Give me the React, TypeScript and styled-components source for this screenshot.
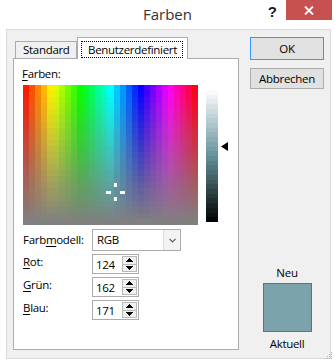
import React from 'react';
import styled, { createGlobalStyle } from 'styled-components';

const FONT = `"Open Sans", "Noto Sans", "Liberation Sans", sans-serif`;

const Global = createGlobalStyle`
  html, body { margin: 0; padding: 0; background: #fff; }
  body { font-family: ${FONT}; font-size: 11.5px; letter-spacing: -0.3px; color: #000; }
  * { box-sizing: border-box; }
`;

const Window = styled.div`
  width: 335px;
  height: 362px;
  background: #fff;
  display: flex;
  flex-direction: column;
  overflow: hidden;
  position: relative;
`;

const TitleBar = styled.div`
  height: 29px;
  display: grid;
  grid-template-columns: 1fr auto 1fr;
  align-items: start;
`;

const Title = styled.div`
  grid-column: 2;
  font-size: 15px;
  letter-spacing: 0;
  line-height: 20px;
  padding-top: 4px;
  color: #333;
`;

const Controls = styled.div`
  grid-column: 3;
  justify-self: end;
  display: flex;
  align-items: flex-start;
  margin-right: 3px;
`;

const HelpGlyph = styled.div`
  font-family: "Liberation Sans", sans-serif;
  font-weight: bold;
  font-size: 15px;
  letter-spacing: 0;
  line-height: 16px;
  padding-top: 4px;
  margin-right: 9px;
  color: #1a1a1a;
`;

const CloseButton = styled.div`
  width: 46px;
  height: 20px;
  background: #c75050;
  display: flex;
  align-items: center;
  justify-content: center;
`;

const Client = styled.div`
  margin: 0 4px 3px 6px;
  height: 330px;
  border: 1px solid #dadada;
  background: #f0f0f0;
  display: flex;
  padding: 7px 6px 0 6px;
  gap: 11px;
`;

const LeftCol = styled.div`
  width: 226px;
  display: flex;
  flex-direction: column;
`;

const TabStrip = styled.div`
  display: flex;
  align-items: flex-end;
  padding-left: 2px;
  margin-bottom: -1px;
  position: relative;
  z-index: 1;
`;

const Tab = styled.div<{ $active?: boolean; $w: number }>`
  width: ${(p) => p.$w}px;
  height: ${(p) => (p.$active ? 22 : 18)}px;
  border: 1px solid #acacac;
  border-bottom: ${(p) => (p.$active ? 'none' : '1px solid #acacac')};
  background: ${(p) => (p.$active ? '#fff' : '#f0f0f0')};
  padding: ${(p) => (p.$active ? '3px 4px 0 3px' : '0 0 0 7px')};
  line-height: 16px;
  white-space: nowrap;
  display: flex;
  align-items: ${(p) => (p.$active ? 'flex-start' : 'center')};
`;

const FocusText = styled.span`
  flex: 1;
  border: 1px dotted #000;
  padding: 0 0 0 6px;
  line-height: 15px;
`;

const Panel = styled.div`
  height: 292px;
  background: #fff;
  border: 1px solid #acacac;
  padding: 7px 0 0 8px;
  display: flex;
  flex-direction: column;
`;

const U = styled.span`
  text-decoration: underline;
  text-underline-offset: 2px;
`;

const SectionLabel = styled.div`
  line-height: 16px;
  height: 18px;
`;

const PickerRow = styled.div`
  display: flex;
  align-items: flex-start;
  margin-top: 1px;
  padding-left: 1px;
`;

const SpectrumSvg = styled.svg`
  display: block;
  flex: none;
`;

const LumBar = styled.svg`
  display: block;
  flex: none;
  margin: 5px 0 0 8px;
`;

const LumArrow = styled.svg`
  display: block;
  flex: none;
  margin-left: 3px;
`;

const FieldRow = styled.div<{ $gap: number; $center?: boolean }>`
  display: flex;
  align-items: ${(p) => (p.$center ? 'center' : 'flex-start')};
  margin-top: ${(p) => p.$gap}px;
  padding-left: 1px;
`;

const FieldLabel = styled.div`
  width: 69px;
  line-height: 16px;
  flex: none;
`;

const Select = styled.div`
  width: 89px;
  height: 22px;
  border: 1px solid #acacac;
  background: #fff;
  display: flex;
`;

const SelectValue = styled.div`
  flex: 1;
  padding-left: 4px;
  line-height: 20px;
`;

const SelectButton = styled.div`
  width: 17px;
  border-left: 1px solid #dcdcdc;
  background: #f3f3f3;
  display: flex;
  align-items: center;
  justify-content: center;
`;

const SpinBox = styled.div`
  width: 47px;
  height: 20px;
  border: 1px solid #acacac;
  background: #fff;
  display: flex;
  padding: 1px;
`;

const SpinValue = styled.div`
  flex: 1;
  padding-left: 2px;
  line-height: 18px;
`;

const SpinButtons = styled.div`
  width: 15px;
  display: flex;
  flex-direction: column;
  border: 1px solid #b9b9b9;
  background: #f0f0f0;
`;

const SpinHalf = styled.div<{ $top?: boolean }>`
  flex: 1;
  display: flex;
  align-items: center;
  justify-content: center;
  border-bottom: ${(p) => (p.$top ? '1px solid #b9b9b9' : 'none')};
`;

const RightCol = styled.div`
  width: 74px;
  display: flex;
  flex-direction: column;
  padding-bottom: 7px;
`;

const PushButton = styled.div<{ $default?: boolean; $h: number }>`
  height: ${(p) => p.$h}px;
  border: 1px solid ${(p) => (p.$default ? '#3399ff' : '#adadad')};
  background: #e1e1e1;
  display: flex;
  align-items: center;
  justify-content: center;
  margin-bottom: 8px;
`;

const PreviewGroup = styled.div`
  margin-top: auto;
  display: flex;
  flex-direction: column;
  align-items: center;
`;

const PreviewCaption = styled.div`
  line-height: 15px;
`;

const Swatch = styled.div<{ $color: string }>`
  width: 49px;
  height: 49px;
  border: 1px solid #6d6d6d;
  background: ${(p) => p.$color};
  margin: 3px 0 4px 1px;
`;

const Grip = styled.svg`
  position: absolute;
  right: 2px;
  bottom: 2px;
`;

const SPEC_W = 175;
const SPEC_H = 140;
const COLS = 29;
const ROWS = 23;

const hsl = (h: number, s: number, l: number) =>
  `hsl(${h.toFixed(1)}, ${(s * 100).toFixed(1)}%, ${(l * 100).toFixed(1)}%)`;

const Spectrum: React.FC = () => {
  const rects: React.ReactNode[] = [];
  for (let i = 0; i < COLS; i++) {
    const x0 = Math.round((i * SPEC_W) / COLS);
    const x1 = Math.round(((i + 1) * SPEC_W) / COLS);
    const hue = ((i + 0.5) / COLS) * 360;
    for (let j = 0; j < ROWS; j++) {
      const y0 = Math.round((j * SPEC_H) / ROWS);
      const y1 = Math.round(((j + 1) * SPEC_H) / ROWS);
      const sat = 1 - j / (ROWS - 1);
      rects.push(
        <rect key={`${i}-${j}`} x={x0} y={y0} width={x1 - x0} height={y1 - y0} fill={hsl(hue, sat, 0.5)} />
      );
    }
  }
  return (
    <SpectrumSvg width={SPEC_W} height={SPEC_H} viewBox={`0 0 ${SPEC_W} ${SPEC_H}`} shapeRendering="crispEdges">
      {rects}
      <rect x={91} y={98} width={3} height={4} fill="#fff" />
      <rect x={91} y={112} width={3} height={4} fill="#fff" />
      <rect x={83} y={106} width={5} height={3} fill="#fff" />
      <rect x={97} y={106} width={5} height={3} fill="#fff" />
    </SpectrumSvg>
  );
};

const LUM_H = 132;
const LUM_BANDS = 28;

const Luminance: React.FC<{ h: number; s: number }> = ({ h, s }) => {
  const bands: React.ReactNode[] = [];
  for (let k = 0; k < LUM_BANDS; k++) {
    const y0 = Math.round((k * LUM_H) / LUM_BANDS);
    const y1 = Math.round(((k + 1) * LUM_H) / LUM_BANDS);
    const l = 1 - (k + 0.5) / LUM_BANDS;
    bands.push(<rect key={k} x={0} y={y0} width={12} height={y1 - y0} fill={hsl(h, s, l)} />);
  }
  return (
    <LumBar width={12} height={LUM_H} viewBox={`0 0 12 ${LUM_H}`} shapeRendering="crispEdges">
      {bands}
    </LumBar>
  );
};

const Spin: React.FC<{ value: number }> = ({ value }) => (
  <SpinBox>
    <SpinValue>{value}</SpinValue>
    <SpinButtons>
      <SpinHalf $top>
        <svg width="7" height="4" viewBox="0 0 7 4" shapeRendering="crispEdges">
          <polygon points="3.5,0 7,4 0,4" fill="#000" />
        </svg>
      </SpinHalf>
      <SpinHalf>
        <svg width="7" height="4" viewBox="0 0 7 4" shapeRendering="crispEdges">
          <polygon points="0,0 7,0 3.5,4" fill="#000" />
        </svg>
      </SpinHalf>
    </SpinButtons>
  </SpinBox>
);

export default function App() {
  const r = 124, g = 162, b = 171;
  const lum = (Math.max(r, g, b) + Math.min(r, g, b)) / 2 / 255;
  const arrowTop = Math.round(5 + (1 - lum) * LUM_H - 4);
  return (
    <>
      <Global />
      <Window>
        <TitleBar>
          <Title>Farben</Title>
          <Controls>
            <HelpGlyph>?</HelpGlyph>
            <CloseButton>
              <svg width="10" height="9" viewBox="0 0 10 9">
                <path d="M1 0.5 L9 8.5 M9 0.5 L1 8.5" stroke="#fff" strokeWidth="1.8" />
              </svg>
            </CloseButton>
          </Controls>
        </TitleBar>
        <Client>
          <LeftCol>
            <TabStrip>
              <Tab $w={62}>Standard</Tab>
              <Tab $active $w={111}>
                <FocusText>Benutzerdefiniert</FocusText>
              </Tab>
            </TabStrip>
            <Panel>
              <SectionLabel>
                <U>F</U>arben:
              </SectionLabel>
              <PickerRow>
                <Spectrum />
                <Luminance h={191.5} s={0.219} />
                <LumArrow width={7} height={9} viewBox="0 0 7 9" style={{ marginTop: arrowTop }}>
                  <polygon points="0,4.5 7,0 7,9" fill="#000" />
                </LumArrow>
              </PickerRow>
              <FieldRow $gap={4} $center>
                <FieldLabel>
                  Farb<U>m</U>odell:
                </FieldLabel>
                <Select>
                  <SelectValue>RGB</SelectValue>
                  <SelectButton>
                    <svg width="7" height="5" viewBox="0 0 7 5">
                      <path d="M0.5 0.8 L3.5 3.8 L6.5 0.8" stroke="#5a5a5a" strokeWidth="1.2" fill="none" />
                    </svg>
                  </SelectButton>
                </Select>
              </FieldRow>
              <FieldRow $gap={3}>
                <FieldLabel>
                  <U>R</U>ot:
                </FieldLabel>
                <Spin value={r} />
              </FieldRow>
              <FieldRow $gap={3}>
                <FieldLabel>
                  <U>G</U>rün:
                </FieldLabel>
                <Spin value={g} />
              </FieldRow>
              <FieldRow $gap={3}>
                <FieldLabel>
                  <U>B</U>lau:
                </FieldLabel>
                <Spin value={b} />
              </FieldRow>
            </Panel>
          </LeftCol>
          <RightCol>
            <PushButton $default $h={23}>OK</PushButton>
            <PushButton $h={21}>Abbrechen</PushButton>
            <PreviewGroup>
              <PreviewCaption>Neu</PreviewCaption>
              <Swatch $color={`rgb(${r}, ${g}, ${b})`} />
              <PreviewCaption>Aktuell</PreviewCaption>
            </PreviewGroup>
          </RightCol>
        </Client>
        <Grip width={9} height={9} viewBox="0 0 9 9" shapeRendering="crispEdges">
          <rect x={7} y={1} width={1} height={1} fill="#b0b0b0" />
          <rect x={5} y={3} width={1} height={1} fill="#b0b0b0" />
          <rect x={7} y={3} width={1} height={1} fill="#b0b0b0" />
          <rect x={3} y={5} width={1} height={1} fill="#b0b0b0" />
          <rect x={5} y={5} width={1} height={1} fill="#b0b0b0" />
          <rect x={7} y={5} width={1} height={1} fill="#b0b0b0" />
          <rect x={1} y={7} width={1} height={1} fill="#b0b0b0" />
          <rect x={3} y={7} width={1} height={1} fill="#b0b0b0" />
          <rect x={5} y={7} width={1} height={1} fill="#b0b0b0" />
          <rect x={7} y={7} width={1} height={1} fill="#b0b0b0" />
        </Grip>
      </Window>
    </>
  );
}
